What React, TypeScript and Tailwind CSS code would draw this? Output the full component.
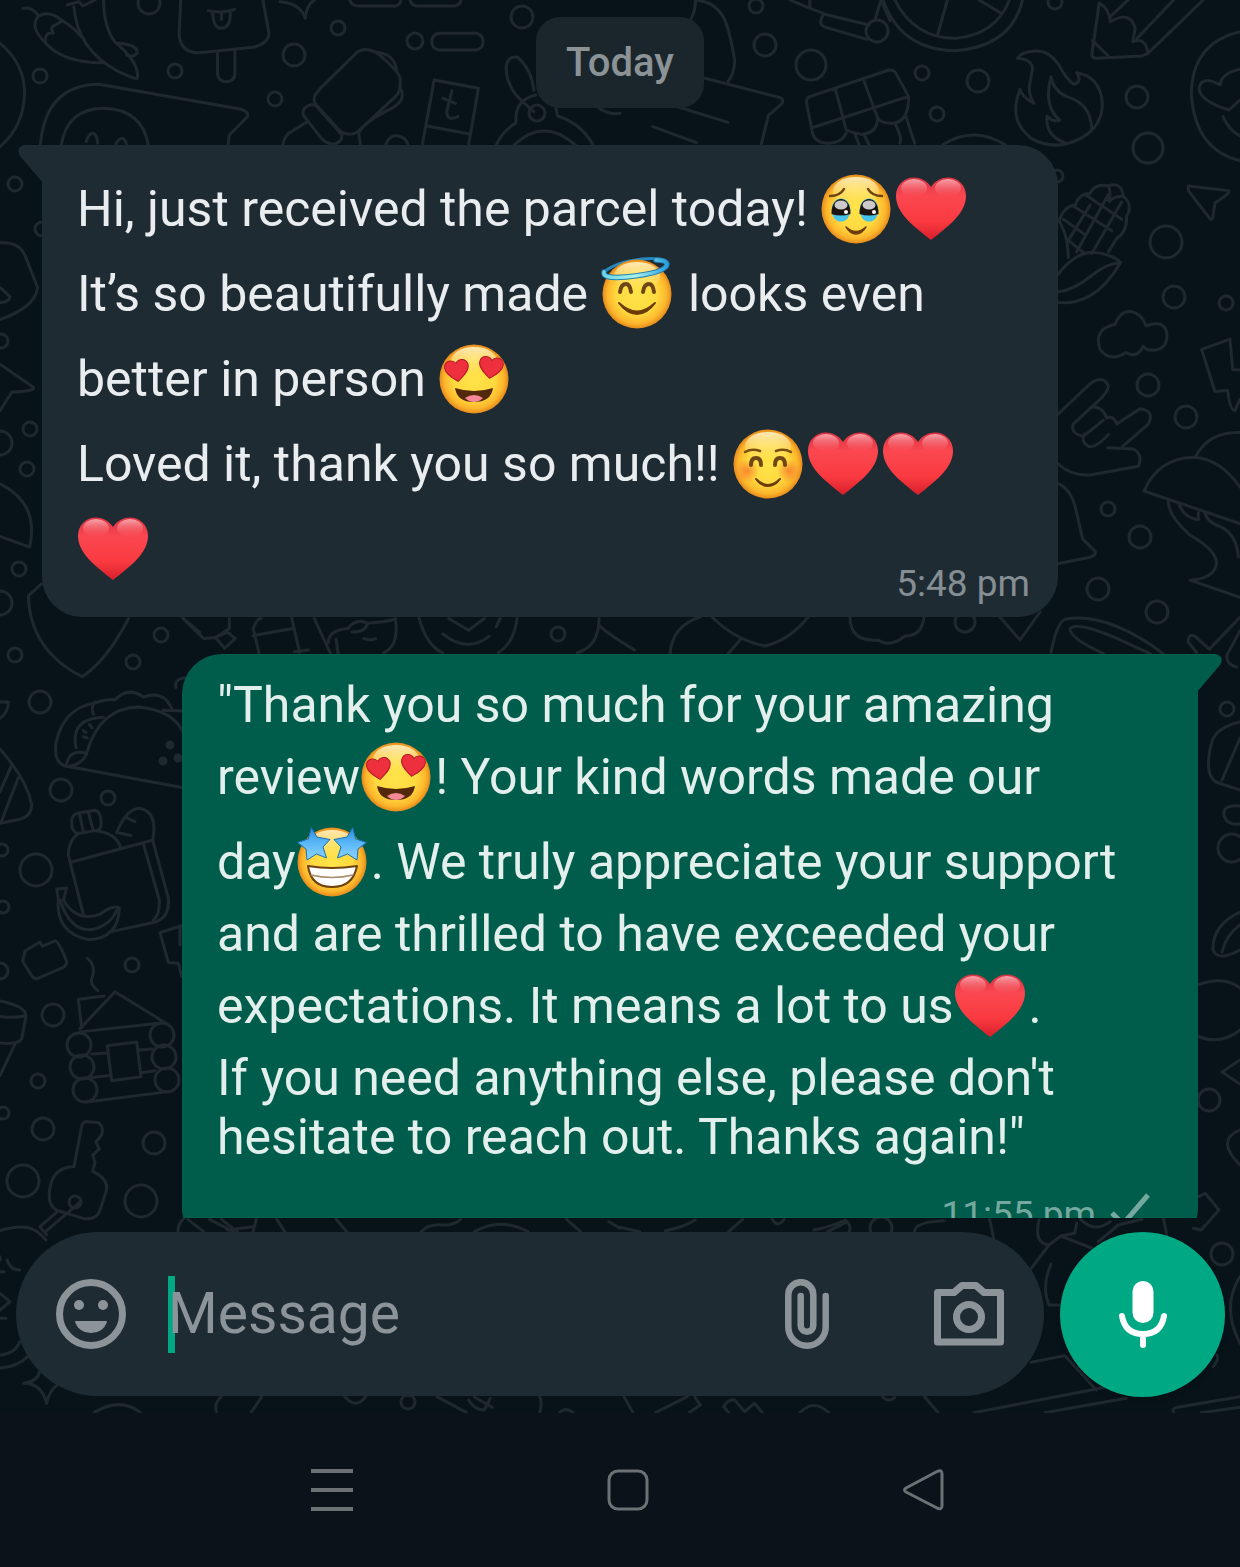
import type { ReactNode } from 'react'

const BUBBLES: [number, number, number][] = [
    [149, 3, 11], [338, 28, 7], [294, 55, 11], [415, 41, 8], [175, 71, 7], [40, 76, 7], [275, 99, 7],
    [522, 17, 11], [537, 113, 8], [15, 184, 7], [756, 6, 7], [765, 45, 11], [811, 65, 15], [922, 73, 7],
    [978, 81, 11], [937, 114, 7], [1055, 2, 7], [1137, 97, 11], [1148, 148, 15], [877, 31, 11],
    [1166, 242, 16], [1174, 297, 11], [1226, 303, 7], [1148, 385, 11], [1186, 417, 11], [1108, 509, 7],
    [1140, 537, 11], [1098, 589, 11], [1157, 612, 11], [1227, 709, 7], [1057, 176, 6], [42, 229, 7],
    [1, 341, 7], [0, 443, 12], [30, 429, 7], [27, 469, 7], [19, 569, 7], [0, 603, 12], [558, 634, 7],
    [15, 655, 7], [133, 662, 7], [161, 635, 7], [40, 702, 11], [61, 790, 11], [108, 798, 7], [36, 870, 16],
    [2, 850, 6], [3, 907, 6], [132, 965, 7], [53, 1015, 11], [0, 971, 8], [38, 1081, 7], [3, 1113, 6],
    [43, 1129, 11], [154, 1143, 11], [23, 1181, 16], [141, 1201, 16], [75, 1202, 6], [79, 1045, 12],
    [82, 1067, 12], [85, 1090, 12], [162, 1035, 12], [164, 1057, 12], [167, 1080, 12], [408, 1402, 7],
    [881, 1228, 11], [1222, 1254, 11], [965, 622, 10], [1209, 1100, 11], [1232, 848, 14],
]

// each sheet of doodles has its own grid, placed on the wallpaper by its transform
const DOODLES = [
    {
        at: 'translate(0 0) scale(.3954 .3333)',
        paths: [
            'M58 25Q80 18 98 48M98 48Q125 30 155 60M98 48Q72 80 115 128M115 128Q112 95 135 100Q125 80 140 75L158 62Q190 85 205 110M115 128Q160 190 265 188M187 20Q195 150 300 215Q340 238 347 235Q355 190 290 125Q262 80 262 0M170 15L200 5L210 18L240 0M300 130Q350 135 347 160Q335 175 320 165',
            'M457 0L453 105Q458 160 505 158L640 142Q680 130 680 98L665 0M550 155V220Q552 245 572 245Q594 245 594 220V150M527 32Q560 42 593 28M538 40Q540 85 560 85Q585 82 582 36M560 40V58',
            'M708 5Q760 10 772 55Q775 15 795 0M885 0Q890 18 905 18H1000Q1012 16 1014 0M1037 0Q1042 18 1055 18H1150Q1164 14 1166 0',
            'M1110 100H1204Q1222 105 1222 125Q1222 145 1204 150H1110Q1092 145 1092 125Q1092 105 1110 100Z',
            'M0 130Q62 190 62 280Q60 380 0 440M102 435Q115 255 250 253L610 328Q630 335 626 350L580 405L577 435M155 435Q170 325 265 325Q360 330 375 435M218 425Q225 400 235 400Q245 402 247 430M293 432Q300 415 310 415Q318 420 320 435',
            'M797 285Q790 300 800 315L862 395Q885 410 905 395L1000 290Q1015 275 1012 235Q1010 215 955 160Q925 140 905 155L810 265ZM770 325Q785 308 800 318L865 405Q865 430 840 433Q825 430 815 418L770 350Q762 340 770 325M955 157Q1000 165 1003 213M1012 265Q1030 300 990 325Q915 370 907 400L912 435M775 367L730 400Q718 415 715 435M975 435Q985 405 1005 407Q1028 412 1032 435',
            'M1068 435L1098 240L1210 265L1185 435M1080 378L1187 402M1143 272L1130 335Q1130 365 1158 350M1120 295L1152 310',
            'M1350 270Q1345 210 1310 172Q1285 165 1280 200Q1280 260 1320 303L1350 335M1355 285Q1300 300 1305 368Q1270 395 1255 435M1405 320L1410 348Q1470 370 1500 435M1300 435Q1375 350 1455 435M1515 325Q1540 345 1568 340',
        ],
    },
    {
        at: 'translate(620 0) scale(.3954 .3333)',
        paths: [
            'M190 0Q192 30 180 55M190 0Q250 5 270 75Q280 110 290 180Q290 220 273 245M215 235L405 293Q415 300 410 310L375 347L357 435M150 322L273 367M83 380L193 428',
            'M430 0Q470 22 515 40M480 0V18M515 42Q498 75 520 82L625 118M515 42L630 75M645 60L660 0L683 62',
            'M665 0Q710 150 848 152Q990 140 1018 0M695 0Q745 115 848 115Q950 105 985 0M828 0L803 105M908 0L962 38',
            'M1212 10L1193 165Q1195 175 1205 175L1320 168L1335 160L1475 0M1212 10Q1235 20 1240 65Q1290 30 1303 85L1297 125Q1330 110 1335 160M1240 50L1285 0M1308 115L1400 0M1195 122L1235 168',
            'M1568 95Q1445 130 1445 285Q1455 450 1568 482M1540 330Q1460 300 1465 260Q1475 225 1518 255Q1520 220 1568 208M1540 330L1568 300M1525 350Q1540 390 1568 408',
            'M1005 175Q1050 180 1042 215L1035 260Q1035 290 1047 310Q1015 290 1012 268Q980 360 1040 415Q1100 455 1165 415Q1220 380 1220 310Q1215 230 1155 218Q1170 245 1148 253Q1130 240 1110 195Q1085 150 1050 153Q1015 155 1005 175ZM1130 430Q1075 410 1080 348Q1095 368 1112 360Q1070 320 1090 230Q1095 270 1130 290Q1190 310 1193 385',
            'M480 290Q470 295 472 310L487 400Q495 430 525 430Q560 430 572 400M480 290L680 210Q690 208 697 218L730 290Q730 370 685 370Q660 370 652 355Q650 400 610 403Q590 400 572 390L545 268M487 383L728 290M617 243L652 355M695 370Q715 415 708 430M722 345L745 430M595 405L605 435M618 405L630 435M815 435Q895 375 975 435',
        ],
    },
    {
        at: 'translate(1040 160) scale(.3333 .3827)',
        paths: [
            'M57 158Q85 200 85 255M57 158Q75 118 105 118Q120 85 150 88Q165 60 205 68Q245 55 250 95Q280 115 260 148Q260 190 230 205L205 240M70 155L135 195M100 120L215 185M135 90L245 155M150 118L85 210M205 90L110 240M245 110L155 245M85 210L135 245M205 68Q215 90 205 105M250 95Q220 95 208 108M53 300Q110 235 170 242Q220 248 242 268Q200 330 150 355Q100 378 53 372M53 345Q100 340 150 305Q200 270 242 268',
            'M445 68L565 80Q575 85 525 112L518 152Q512 160 505 148L445 80Z',
            'M225 430Q240 395 270 395Q305 400 318 433Q380 415 381 460Q378 505 320 495L310 487Q290 520 258 503Q210 530 180 495Q160 440 225 430Z',
            'M53 665L150 585Q190 560 205 590Q205 610 155 645Q190 645 200 675Q220 665 230 690L300 650Q345 655 325 690L248 748M155 645L100 690Q90 715 130 722L190 680M135 715Q120 735 145 748Q165 755 205 717M203 752L280 755Q310 770 295 800L150 823Q90 825 53 793',
            'M485 495L570 468L578 548H600M485 495L525 605L563 602Q570 655 585 655L600 625',
            'M312 865Q355 780 460 777Q540 780 600 855M312 865L600 950M467 775Q505 710 600 712M385 893Q385 930 450 980Q530 1020 530 1055Q520 1095 450 1098L600 1143M415 895Q430 935 475 940V922M495 922Q500 945 545 960Q590 980 595 1037',
            'M53 845Q95 860 108 915L128 990L165 1022Q170 1033 150 1038L53 1055',
            'M33 1287Q50 1210 75 1200Q200 1180 370 1290M190 1290Q90 1250 90 1225Q110 1205 230 1250L330 1290M470 1287L445 1260Q445 1235 465 1245L508 1278L600 1195M600 1230L560 1295Q560 1320 590 1325',
        ],
    },
    {
        at: 'translate(0 150) scale(.3954 .3571)',
        paths: [
            'M0 260Q50 255 65 300L95 385Q90 440 0 475M0 385L25 410Q25 425 0 428M0 600L85 665Q88 675 30 678L0 730M0 935Q100 990 75 1112L0 1082M105 1215L72 1248Q75 1400 208 1475Q270 1430 325 1312',
            'M462 1312L515 1368L545 1365L580 1340L580 1312M545 1365L575 1350L595 1368L568 1395ZM640 1340Q650 1312 660 1312M640 1340L655 1408M640 1360L740 1340M738 1312L758 1408M745 1405L780 1400M795 1312L835 1408M830 1380Q830 1345 880 1340Q900 1310 930 1325Q925 1350 890 1350M850 1370L855 1410M930 1325Q990 1320 1000 1312M1000 1312Q1010 1390 970 1408M920 1368Q935 1375 950 1368',
            'M1060 1312Q1080 1390 1120 1408M1308 1312Q1300 1380 1260 1408M1135 1312L1185 1345L1225 1312M1120 1355Q1180 1410 1237 1362M1255 1335L1265 1312M1460 1408Q1515 1390 1515 1312M1515 1330Q1530 1350 1605 1400M445 1505Q440 1480 470 1478',
        ],
    },
    {
        at: 'translate(0 600) scale(.3333 .4082)',
        paths: [
            'M550 45L600 80M0 250L25 250Q25 275 0 290',
            'M205 408Q160 405 168 350Q190 265 285 252Q330 240 345 245Q385 210 430 238Q490 220 515 265M205 408L550 460M205 408Q255 400 262 370Q300 265 415 262Q520 270 550 325M200 400Q210 365 258 375M228 362Q210 290 310 287M280 280Q272 262 285 250M250 320l8 5M268 305l8 8M250 335l12 3M490 270L550 272',
            'M0 365Q80 440 95 500Q95 530 60 537L0 547M0 470L33 408M3 545L55 435',
            'M215 545Q215 525 235 522L285 515Q305 520 303 548Q305 565 285 565L235 572Q215 570 215 545M238 522L250 568M265 520L280 565M235 572Q205 590 205 625L250 770M285 565Q350 570 362 607M215 642L460 588M350 570Q380 510 420 510Q475 520 458 590M378 533L405 543M355 570L393 577M458 588L505 730Q510 775 470 788L330 813M430 597L478 735Q480 770 460 785',
            'M170 708L200 706L190 735Q230 790 300 770Q340 745 358 755Q355 830 265 832Q165 815 175 730ZM180 735Q210 810 270 808Q330 800 350 760',
            'M75 860L120 838L128 848L165 835Q175 835 200 885Q200 895 190 900L110 928Q100 928 95 920L68 885Z',
            'M262 878Q290 895 275 930Q270 940 293 957M240 1050L345 960L495 1035L240 1058M245 1048L235 978L312 970M275 1112L320 1110M275 1170L330 1165M322 1092L410 1083L423 1168L335 1178ZM415 1103L455 1100M423 1158L465 1153M260 1230L500 1205',
            'M545 798L480 815L505 888L535 890L545 922M540 798V845M0 982Q80 995 78 1020L65 1075Q55 1090 0 1085M0 1020Q50 1025 78 1018M45 1088L0 1165',
            'M222 1388L245 1290Q248 1275 265 1278L295 1280Q312 1290 305 1310L288 1328L298 1345L278 1360L285 1378L278 1400Q330 1420 318 1450L300 1495Q290 1520 250 1515L170 1495Q140 1480 150 1440Q160 1390 222 1388ZM240 1475L140 1545M170 1500L120 1535L140 1555M0 1545Q60 1530 95 1540Q120 1550 138 1568',
        ],
    },
    {
        at: 'translate(0 1190) scale(.3954 .3333)',
        paths: [
            'M0 200V210M18 210Q25 240 50 240M0 245H10M0 310L25 335L0 360M0 385H15M0 495Q40 490 50 455M0 535Q45 530 70 500M60 580Q95 575 100 545M60 580Q105 580 118 640Q125 600 145 585M238 668Q305 620 355 668',
            'M450 125Q450 100 465 85M475 88L515 125M530 88L590 125M560 88L600 125M575 120L640 110M640 125L648 88M700 88L720 125M850 88L877 125M1065 125Q1085 100 1120 105Q1150 105 1165 88M1200 125Q1265 80 1335 125M1433 88L1468 125M1540 95L1568 115',
            'M548 668Q540 640 560 620M635 668L662 620M872 620Q900 660 925 620M1105 620L1180 668M1185 630Q1200 660 1225 660L1240 625M1200 622L1245 652M1365 620Q1372 640 1365 668M1415 668Q1430 650 1450 668',
        ],
    },
    {
        at: 'translate(620 1190) scale(.3954 .3333)',
        paths: [
            'M1463 20L1480 10L1515 60L1470 120L1450 115M1375 88L1382 130M0 112L50 125M115 122Q160 112 190 90M275 125L310 88M490 120Q530 112 570 90M525 125L575 95Q585 110 580 125M385 88Q398 115 415 88M745 125Q745 95 820 92M935 88L945 145',
            'M1060 90Q1045 160 1085 165L1040 235M1085 165L1115 138L1195 175M1115 138L1150 130L1155 100M1090 222Q1065 290 1085 345L1110 345M1165 88Q1200 130 1240 95M1210 155L1260 105L1320 88',
            'M1568 260Q1520 350 1568 460M1500 530Q1515 510 1510 495M1040 517L1125 497L1205 600M895 668L1280 580M1075 668L1280 625M1400 668Q1395 655 1410 652L1568 620M1470 668L1568 652M770 620L805 668M455 668Q490 625 528 668M10 620L33 668M90 668L170 620M190 622L203 645L175 668M262 650Q275 625 290 630L315 665L340 640L360 668M262 650L275 668M665 622Q680 638 695 622',
        ],
    },
    {
        at: 'translate(0 0)',
        paths: [
            'M670 654Q672 626 700 617M712 617Q735 640 765 646Q790 640 808 617M728 654L740 640M850 617Q850 642 878 640Q890 648 905 636Q922 636 924 617M1000 617L1020 640L1040 612',
            'M1240 722Q1214 728 1211 745Q1204 775 1216 782L1240 790M1240 738L1222 780M1240 806Q1222 804 1224 816Q1228 826 1240 824M1240 912Q1212 925 1213 950Q1218 962 1240 950M1240 925Q1226 935 1222 952M1197 985Q1225 975 1240 988M1197 1036Q1220 1046 1240 1030M1240 1060L1222 1072L1240 1084M1240 1130Q1215 1140 1240 1165',
        ],
    },
]

function Wallpaper() {
    return (
        <svg
            className="absolute inset-0 size-full"
            viewBox="0 0 1240 1413"
            preserveAspectRatio="xMidYMid slice"
            fill="none"
            stroke="#1f282f"
            strokeWidth="3"
            strokeLinecap="round"
            strokeLinejoin="round"
            aria-hidden="true"
        >
            {DOODLES.map((sheet) => (
                <g key={sheet.at} transform={sheet.at}>
                    {sheet.paths.map((d) => (
                        <path key={d} d={d} vectorEffect="non-scaling-stroke" />
                    ))}
                </g>
            ))}
            {BUBBLES.map(([x, y, r]) => (
                <circle key={`${x}-${y}`} cx={x} cy={y} r={r} />
            ))}
            <g fill="#1f282f">
                <circle cx="170" cy="745" r="3" />
                <circle cx="178" cy="758" r="3" />
                <circle cx="163" cy="761" r="3" />
            </g>
        </svg>
    )
}

const HEART = 'M35 66C20 54 0 40 0 22C0 11 8 3.500 18 3.500C26 3.500 32 8 35 13C38 8 44 3.500 52 3.500C62 3.500 70 11 70 22C70 40 50 54 35 66Z'
const STAR = 'M14.500 1L20 10L33 12.500L26 20L29.500 31L19.500 27L10 33L9 22L.5 15.500L11 12Z'

function EmojiDefs() {
    return (
        <svg className="absolute size-0" aria-hidden="true">
            <defs>
                <radialGradient id="face" cx="0.5" cy="0.5" r="0.5">
                    <stop offset="0" stopColor="#ffe449" />
                    <stop offset="0.6" stopColor="#ffd93f" />
                    <stop offset="0.86" stopColor="#fcb62c" />
                    <stop offset="1" stopColor="#e58a1c" />
                </radialGradient>
                <linearGradient id="shine" x1="0" y1="0" x2="0" y2="1">
                    <stop offset="0" stopColor="#fff6d0" stopOpacity="0.85" />
                    <stop offset="1" stopColor="#ffe98a" stopOpacity="0" />
                </linearGradient>
                <linearGradient id="heart" x1="0" y1="0" x2="0" y2="1">
                    <stop offset="0" stopColor="#d93243" />
                    <stop offset="0.3" stopColor="#fb4750" />
                    <stop offset="0.7" stopColor="#fa3a40" />
                    <stop offset="1" stopColor="#d81f2c" />
                </linearGradient>
                <linearGradient id="gloss" x1="0" y1="0" x2="0" y2="1">
                    <stop offset="0" stopColor="#ffc2c6" stopOpacity="0.8" />
                    <stop offset="1" stopColor="#ff6f76" stopOpacity="0" />
                </linearGradient>
                <radialGradient id="blush">
                    <stop offset="0" stopColor="#f9752b" stopOpacity="0.8" />
                    <stop offset="1" stopColor="#f9752b" stopOpacity="0" />
                </radialGradient>
                <linearGradient id="star" x1="0" y1="0" x2="0" y2="1">
                    <stop offset="0" stopColor="#2f8fe0" />
                    <stop offset="0.5" stopColor="#5db9f8" />
                    <stop offset="1" stopColor="#8fd4ff" />
                </linearGradient>
                <linearGradient id="halo" x1="0" y1="0" x2="1" y2="0">
                    <stop offset="0" stopColor="#6fd6e8" />
                    <stop offset="0.5" stopColor="#a8f2ea" />
                    <stop offset="1" stopColor="#2b9fe0" />
                </linearGradient>
            </defs>
        </svg>
    )
}

function Emoji({ label, children }: { label: string; children: ReactNode }) {
    return (
        <svg
            className="mt-[7px] mr-1 mb-2 ml-px inline-block size-[70px] overflow-visible align-[-26px]"
            viewBox="0 0 70 70"
            fill="none"
            strokeLinecap="round"
            strokeLinejoin="round"
            role="img"
            aria-label={label}
        >
            {children}
        </svg>
    )
}

function Face() {
    return (
        <>
            <circle cx="35" cy="35" r="34.500" fill="url(#face)" />
            <ellipse cx="35" cy="17" rx="23" ry="14" fill="url(#shine)" />
        </>
    )
}

function RedHeart() {
    return (
        <Emoji label="red heart">
            <path d={HEART} fill="url(#heart)" />
            <ellipse cx="18" cy="14" rx="13" ry="9" fill="url(#gloss)" />
            <ellipse cx="52" cy="14" rx="13" ry="9" fill="url(#gloss)" />
        </Emoji>
    )
}

function HoldingTears() {
    return (
        <Emoji label="face holding back tears">
            <Face />
            <path d="M9 22Q19 22 23 15M61 22Q51 22 47 15" stroke="#6b4210" strokeWidth="2.500" />
            {[20, 48].map((x) => (
                <g key={x}>
                    <ellipse cx={x} cy="36" rx="9.500" ry="11.500" fill="#46c3e8" />
                    <path d={`M${x - 9.5} 40C${x - 10} 20 ${x + 10} 20 ${x + 9.5} 40Q${x} 43 ${x - 9.5} 40Z`} fill="#1b1411" />
                    <ellipse cx={x} cy="31" rx="6.500" ry="4.500" fill="#cbc9ca" />
                    <circle cx={x + 5} cy="38" r="2" fill="#fff" />
                </g>
            ))}
            <path d="M25 53Q35 62 45 53Q41 60 35 60Q29 60 25 53Z" fill="#6b3c08" stroke="#6b3c08" strokeWidth="1.500" />
        </Emoji>
    )
}

function Halo() {
    return (
        <Emoji label="smiling face with halo">
            <path d="M2 13Q14 3 40 0Q64 -2 65 5" stroke="#2788bd" strokeWidth="3" />
            <Face />
            <path d="M18 33Q19 25 24 25Q28 25 29 33M41 33Q42 25 47 25Q51 25 52 33" stroke="#6e4716" strokeWidth="4" />
            <path d="M17 44Q35 61 53 44Q45 55 35 55Q25 55 17 44Z" fill="#6b3c08" stroke="#6b3c08" strokeWidth="2" />
            <path d="M2 13Q0 20 24 18Q65 14 65 5Q64 1 54 1" stroke="#217fae" strokeWidth="5.500" />
            <path d="M2 13Q0 20 24 18Q65 14 65 5Q64 1 54 1" stroke="url(#halo)" strokeWidth="3.500" />
        </Emoji>
    )
}

function HeartEyes() {
    return (
        <Emoji label="smiling face with heart eyes">
            <Face />
            <g stroke="#b51a28" strokeWidth="3">
                <path d={HEART} transform="translate(6 15) rotate(-7 12 12) scale(.34)" fill="#ee2f3d" />
                <path d={HEART} transform="translate(40 12) rotate(7 12 12) scale(.34)" fill="#ee2f3d" />
            </g>
            <path d="M16 44Q35 50 54 44Q52 58 35 58Q18 58 16 44Z" fill="#54290b" />
            <path d="M26 54Q35 48 44 54Q40 58 35 58Q30 58 26 54Z" fill="#f48896" />
        </Emoji>
    )
}

function Blushing() {
    return (
        <Emoji label="smiling face">
            <Face />
            <circle cx="14" cy="42" r="12" fill="url(#blush)" />
            <circle cx="56" cy="42" r="12" fill="url(#blush)" />
            <path d="M12 23Q19 19 27 22M58 23Q51 19 43 22" stroke="#7a4d13" strokeWidth="2.500" />
            <path d="M18 36Q18 29 23 29Q28 29 28 36M42 36Q42 29 47 29Q52 29 52 36" stroke="#6e4716" strokeWidth="4" />
            <path d="M23 50Q35 62 47 50Q42 57 35 57Q28 57 23 50Z" fill="#6b3c08" stroke="#6b3c08" strokeWidth="2" />
        </Emoji>
    )
}

function StarStruck() {
    return (
        <Emoji label="star struck">
            <Face />
            <path d="M11 39Q35 43 60 39Q56 60 35 60Q14 60 11 39Z" fill="#fff" stroke="#70420e" strokeWidth="2" />
            <path d="M14 48Q35 53 56 48" stroke="#a98b68" strokeWidth="1.500" />
            <g fill="url(#star)" stroke="#1e6fae" strokeWidth="1">
                <path d={STAR} />
                <path d={STAR} transform="translate(70 0) scale(-1 1)" />
            </g>
        </Emoji>
    )
}

function Tail({ className, d }: { className: string; d: string }) {
    return (
        <svg className={`absolute top-0 h-[38px] w-[25px] ${className}`} viewBox="0 0 25 38" fill="currentColor" aria-hidden="true">
            <path d={d} />
        </svg>
    )
}

function Conversation() {
    return (
        <main className="flex min-h-0 flex-1 flex-col gap-[37px] overflow-hidden px-[42px] pt-[17px]">
            <div className="shrink-0 self-center rounded-3xl bg-[#1a262c] px-[30px] py-[22px] text-[40px] leading-[47px] font-medium text-[#8b9397]">
                Today
            </div>

            <article className="relative w-[calc(100%-140px)] shrink-0 self-start rounded-[40px] rounded-tl-none bg-[#1f2b33] pt-[22px] pb-[11px]">
                <Tail className="right-full -mr-px text-[#1f2b33]" d="M25 0H7Q-3 2 2 11L25 38Z" />
                <p className="px-[35px] text-[50px] leading-[59px] text-[#e9edef]">
                    Hi, just received the parcel today! <HoldingTears /><RedHeart />
                    <br />
                    It’s so beautifully made <Halo /> looks even better in person <HeartEyes />
                    <br />
                    Loved it, thank you so much!! <Blushing /><RedHeart /><RedHeart /><RedHeart />
                </p>
                <div className="-mt-[30px] flex justify-end pr-7 text-[37px] leading-[44px] text-[#858e93]">
                    <time>5:48 pm</time>
                </div>
            </article>

            <article className="relative w-[calc(100%-140px)] shrink-0 self-end rounded-[40px] rounded-tr-none bg-[#005d4b] pt-[22px] pb-[11px]">
                <Tail className="left-full -ml-px text-[#005d4b]" d="M0 0H18Q28 2 23 11L0 38Z" />
                <p className="px-[35px] text-[50px] leading-[59px] text-[#e2efec]">
                    "Thank you so much for your amazing review
                    <HeartEyes />! Your kind words made our{' '}
                    <span className="whitespace-nowrap">day<StarStruck />.</span> We truly appreciate your support and are
                    thrilled to have exceeded your expectations. It means a lot to us
                    <RedHeart />.
                    <br />
                    If you need anything else, please don't hesitate to reach out. Thanks again!"
                </p>
                <div className="mt-[26px] flex justify-end gap-[14px] pr-7 text-[37px] leading-[44px] text-[#75a89e]">
                    <time>11:55 pm</time>
                    <svg className="h-[44px] w-[60px]" viewBox="0 0 60 44" fill="none" stroke="currentColor" strokeWidth="5" role="img" aria-label="sent">
                        <path d="M2 20L13 31L38 2" />
                    </svg>
                </div>
            </article>
        </main>
    )
}

function Composer() {
    return (
        <form className="mt-[14px] mb-4 flex gap-4 pr-[15px] pl-4">
            <div className="flex h-[164px] min-w-0 flex-1 items-center rounded-full bg-[#1f2b33] px-10 text-[#8c9499]">
                <button type="button" aria-label="Emoji">
                    <svg className="size-[70px]" viewBox="0 0 70 70" fill="currentColor">
                        <circle cx="35" cy="35" r="31.500" fill="none" stroke="currentColor" strokeWidth="7" />
                        <circle cx="23" cy="26" r="5" />
                        <circle cx="47" cy="26" r="5" />
                        <path d="M19 43Q19 42 20 42H50Q51 42 51 43Q47 54 35 54Q23 54 19 43Z" />
                    </svg>
                </button>
                <div className="relative ml-[42px] min-w-0 flex-1">
                    <span className="absolute inset-y-0 left-0 w-[7px] bg-[#00a884]" />
                    <input
                        className="relative block h-[77px] w-full bg-transparent text-[57px] outline-none placeholder:text-[#8c9499]"
                        type="text"
                        aria-label="Message"
                        placeholder="Message"
                    />
                </div>
                <button type="button" aria-label="Attach">
                    <svg className="h-[70px] w-[44px]" viewBox="0 0 44 70" fill="none" stroke="currentColor" strokeWidth="6.500" strokeLinecap="round">
                        <path d="M40.700 17V48A18.700 18.700 0 0 1 3.300 48V15.700A12.500 12.500 0 0 1 28.300 15.700V46.500A6.300 6.300 0 0 1 15.700 46.500V17" />
                    </svg>
                </button>
                <button className="ml-[105px]" type="button" aria-label="Camera">
                    <svg className="h-[64px] w-[70px]" viewBox="0 0 70 64" fill="none" stroke="currentColor" strokeWidth="7" strokeLinejoin="round">
                        <path d="M3.500 10.500H20L28 3.500H42L50 10.500H66.500V60H3.500Z" />
                        <circle cx="35" cy="35" r="12.500" />
                    </svg>
                </button>
            </div>
            <button
                className="flex size-[165px] shrink-0 items-center justify-center rounded-full bg-[#00a884] text-white shadow-md"
                type="button"
                aria-label="Record voice message"
            >
                <svg className="h-[68px] w-[50px]" viewBox="0 0 50 68" fill="none" stroke="currentColor" strokeWidth="6" strokeLinecap="round">
                    <rect x="14.500" y="0" width="21" height="42" rx="10.500" fill="currentColor" stroke="none" />
                    <path d="M4 35Q7 53 25 53Q43 53 46 35M25 53V64" />
                </svg>
            </button>
        </form>
    )
}

function SystemNav() {
    return (
        <nav className="flex h-[154px] shrink-0 items-center justify-center gap-[254px] bg-[#0b1219] pl-4 text-[#6c7175]">
            <button type="button" aria-label="Recent apps">
                <svg className="size-[42px]" viewBox="0 0 42 42" stroke="currentColor" strokeWidth="4">
                    <path d="M0 2H42M0 21H42M0 40H42" />
                </svg>
            </button>
            <button type="button" aria-label="Home">
                <svg className="size-[42px]" viewBox="0 0 42 42" fill="none" stroke="currentColor" strokeWidth="3">
                    <rect x="2" y="2" width="38" height="38" rx="9" />
                </svg>
            </button>
            <button type="button" aria-label="Back">
                <svg className="size-[42px]" viewBox="0 0 42 42" fill="none" stroke="currentColor" strokeWidth="3" strokeLinejoin="round">
                    <path d="M34 2.500Q39 0 39 5V37Q39 41 34 39L3 23Q0 21 3 19Z" />
                </svg>
            </button>
        </nav>
    )
}

export default function App() {
    return (
        <div className="flex h-screen flex-col bg-[#0b1219] font-['Roboto',sans-serif]">
            <EmojiDefs />
            <div className="relative flex min-h-0 flex-1 flex-col overflow-hidden bg-[#081319]">
                <Wallpaper />
                <div className="relative flex min-h-0 flex-1 flex-col">
                    <Conversation />
                    <Composer />
                </div>
            </div>
            <SystemNav />
        </div>
    )
}
